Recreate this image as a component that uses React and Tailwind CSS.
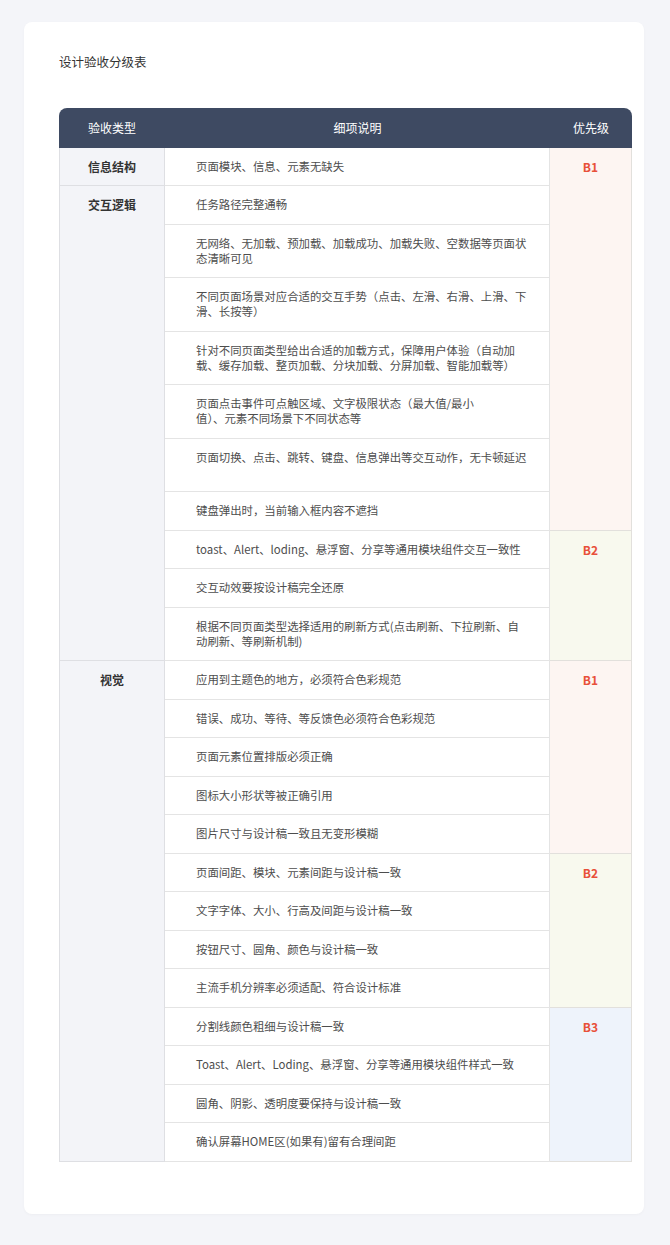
import React from 'react'

const priColors = {
  B1: 'bg-[#fdf5f2]',
  B2: 'bg-[#f8f9ee]',
  B3: 'bg-[#eef3fb]',
}

const rows = [
  { lines: ['页面模块、信息、元素无缺失'], cat: ['信息结构', 1], pri: ['B1', 8] },
  { lines: ['任务路径完整通畅'], cat: ['交互逻辑', 10] },
  { lines: ['无网络、无加载、预加载、加载成功、加载失败、空数据等页面状', '态清晰可见'] },
  { lines: ['不同页面场景对应合适的交互手势（点击、左滑、右滑、上滑、下', '滑、长按等）'] },
  { lines: ['针对不同页面类型给出合适的加载方式，保障用户体验（自动加', '载、缓存加载、整页加载、分块加载、分屏加载、智能加载等）'] },
  { lines: ['页面点击事件可点触区域、文字极限状态（最大值/最小', '值）、元素不同场景下不同状态等'] },
  { lines: ['页面切换、点击、跳转、键盘、信息弹出等交互动作，无卡顿延迟', '\u00a0'] },
  { lines: ['键盘弹出时，当前输入框内容不遮挡'] },
  { lines: ['toast、Alert、loding、悬浮窗、分享等通用模块组件交互一致性'], pri: ['B2', 3] },
  { lines: ['交互动效要按设计稿完全还原'] },
  { lines: ['根据不同页面类型选择适用的刷新方式(点击刷新、下拉刷新、自', '动刷新、等刷新机制)'] },
  { lines: ['应用到主题色的地方，必须符合色彩规范'], cat: ['视觉', 13], pri: ['B1', 5] },
  { lines: ['错误、成功、等待、等反馈色必须符合色彩规范'] },
  { lines: ['页面元素位置排版必须正确'] },
  { lines: ['图标大小形状等被正确引用'] },
  { lines: ['图片尺寸与设计稿一致且无变形模糊'] },
  { lines: ['页面间距、模块、元素间距与设计稿一致'], pri: ['B2', 4] },
  { lines: ['文字字体、大小、行高及间距与设计稿一致'] },
  { lines: ['按钮尺寸、圆角、颜色与设计稿一致'] },
  { lines: ['主流手机分辨率必须适配、符合设计标准'] },
  { lines: ['分割线颜色粗细与设计稿一致'], pri: ['B3', 4] },
  { lines: ['Toast、Alert、Loding、悬浮窗、分享等通用模块组件样式一致'] },
  { lines: ['圆角、阴影、透明度要保持与设计稿一致'] },
  { lines: ['确认屏幕HOME区(如果有)留有合理间距'] },
]

export default function App() {
  return (
    <div
      className="min-h-screen bg-[#f4f5f9] pt-[22px] pl-[24px] pb-[33px]"
      style={{ fontFamily: '"Noto Sans CJK SC", "Noto Sans", sans-serif' }}
    >
      <div className="w-[620px] bg-white rounded-[8px] pt-[31px] pl-[35px] pb-[52px] shadow-[0_1px_3px_rgba(0,0,0,0.03)]">
        <h1 className="text-[12.5px] leading-[18px] text-[#333] font-normal">设计验收分级表</h1>

        <div className="mt-[37px] w-[573px] rounded-t-[8px] overflow-hidden">
          <table className="w-[573px] table-fixed border-separate border-spacing-0 text-[11.4px] leading-[15px]">
            <colgroup>
              <col className="w-[106px]" />
              <col className="w-[385px]" />
              <col className="w-[82px]" />
            </colgroup>
            <thead>
              <tr className="h-[39.5px] bg-[#3e4a62] text-white text-[12px] font-normal">
                <th className="font-normal text-center">验收类型</th>
                <th className="font-normal text-center">细项说明</th>
                <th className="font-normal text-center">优先级</th>
              </tr>
            </thead>
            <tbody>
              {rows.map((row, i) => (
                <tr key={i}>
                  {row.cat && (
                    <td
                      rowSpan={row.cat[1]}
                      className="align-top text-center bg-[#f3f4f8] border-l border-r border-b border-[#dedfe3] py-[11.25px] text-[12px] font-bold text-[#333]"
                    >
                      {row.cat[0]}
                    </td>
                  )}
                  <td className="align-middle border-r border-b border-[#e4e4e4] pl-[31px] pr-[10px] py-[11.25px] text-[#4d4d4d]">
                    {row.lines.map((line, j) => (
                      <div key={j} className="whitespace-nowrap">
                        {line}
                      </div>
                    ))}
                  </td>
                  {row.pri && (
                    <td
                      rowSpan={row.pri[1]}
                      className={`align-top text-center border-r border-b border-[#e2e0dc] py-[11.25px] text-[12px] font-bold text-[#e8503a] ${priColors[row.pri[0]]}`}
                    >
                      {row.pri[0]}
                    </td>
                  )}
                </tr>
              ))}
            </tbody>
          </table>
        </div>
      </div>
    </div>
  )
}
